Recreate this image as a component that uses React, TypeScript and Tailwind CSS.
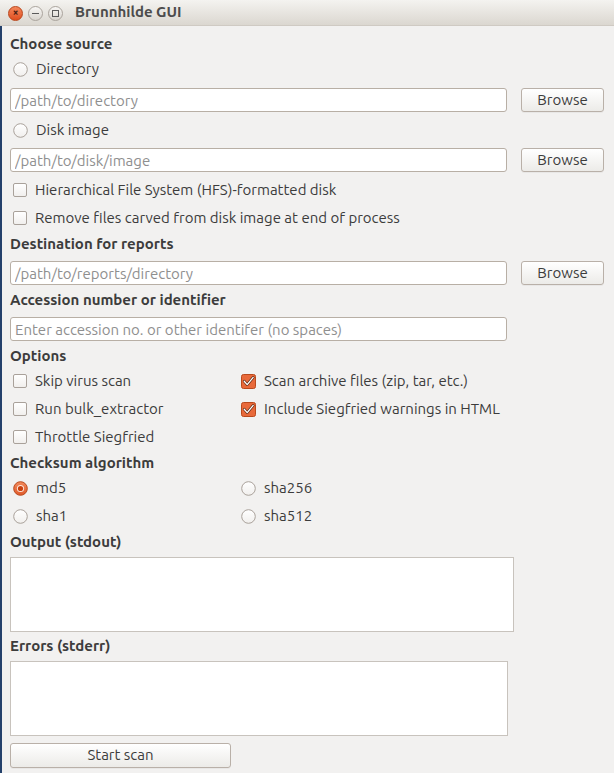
import React from 'react';

const FONT = "font-['Ubuntu','Open_Sans','Liberation_Sans',sans-serif]";

function Heading({ children, className = '' }: { children: React.ReactNode; className?: string }) {
  return (
    <div className={`h-[20px] flex items-center font-bold text-[15px] text-[#3c3c3c] ${className}`}>
      {children}
    </div>
  );
}

function RadioDot({ checked }: { checked?: boolean }) {
  if (checked) {
    return (
      <svg width="15" height="15" viewBox="0 0 15 15" className="shrink-0">
        <defs>
          <linearGradient id="rg" x1="0" y1="0" x2="0" y2="1">
            <stop offset="0" stopColor="#f28a5c" />
            <stop offset="1" stopColor="#e0592a" />
          </linearGradient>
        </defs>
        <circle cx="7.5" cy="7.5" r="6.8" fill="url(#rg)" stroke="#b9491c" strokeWidth="1" />
        <circle cx="7.5" cy="7.5" r="3.6" fill="#fbe4d8" />
        <circle cx="7.5" cy="7.5" r="2.6" fill="#c9410f" />
      </svg>
    );
  }
  return (
    <svg width="15" height="15" viewBox="0 0 15 15" className="shrink-0">
      <defs>
        <linearGradient id="ru" x1="0" y1="0" x2="0" y2="1">
          <stop offset="0" stopColor="#ffffff" />
          <stop offset="1" stopColor="#f1efed" />
        </linearGradient>
      </defs>
      <circle cx="7.5" cy="7.5" r="6.8" fill="url(#ru)" stroke="#a9a19a" strokeWidth="1" />
    </svg>
  );
}

function CheckBox({ checked }: { checked?: boolean }) {
  if (checked) {
    return (
      <svg width="15" height="15" viewBox="0 0 15 15" className="shrink-0">
        <rect x="0.5" y="0.5" width="14" height="14" rx="2" fill="#e8693a" stroke="#b9491c" />
        <path d="M3.2 7.2 L6.2 10.6 L12.2 3.4" fill="none" stroke="#5a2a16" strokeWidth="2.6" strokeLinecap="round" strokeLinejoin="round" />
        <path d="M3.2 7.2 L6.2 10.6 L12.2 3.4" fill="none" stroke="#ffffff" strokeWidth="1.3" strokeLinecap="round" strokeLinejoin="round" />
      </svg>
    );
  }
  return (
    <span className="w-[14px] h-[14px] shrink-0 rounded-[2px] border border-[#a9a19a] bg-gradient-to-b from-white to-[#f1efed]" />
  );
}

function Radio({ label, checked, className = '' }: { label: string; checked?: boolean; className?: string }) {
  return (
    <div className={`h-[20px] flex items-center pl-[3px] ${className}`}>
      <RadioDot checked={checked} />
      <span className="ml-[8px] text-[15px] text-[#3c3c3c]">{label}</span>
    </div>
  );
}

function Check({ label, checked, className = '' }: { label: string; checked?: boolean; className?: string }) {
  return (
    <div className={`h-[20px] flex items-center pl-[3px] ${className}`}>
      <CheckBox checked={checked} />
      <span className="ml-[8px] text-[15px] text-[#3c3c3c]">{label}</span>
    </div>
  );
}

function TextInput({ placeholder, className = '' }: { placeholder: string; className?: string }) {
  return (
    <input
      readOnly
      placeholder={placeholder}
      className={`h-[24px] w-[497px] rounded-[3px] border border-[#b8afa5] bg-white px-[4px] text-[15px] text-[#3c3c3c] placeholder:text-[#8f8f8f] outline-none ${className}`}
    />
  );
}

function Button({ children, className = '' }: { children: React.ReactNode; className?: string }) {
  return (
    <button
      type="button"
      className={`h-[24px] rounded-[3px] border border-[#b9b0a8] bg-gradient-to-b from-white to-[#ecebe8] text-[15px] text-[#3c3c3c] shadow-[0_1px_0_rgba(0,0,0,0.04)] ${className}`}
    >
      {children}
    </button>
  );
}

function PathRow({ placeholder, className = '' }: { placeholder: string; className?: string }) {
  return (
    <div className={`flex items-center ${className}`}>
      <TextInput placeholder={placeholder} />
      <Button className="ml-[14px] w-[83px]">Browse</Button>
    </div>
  );
}

function TitleBar() {
  return (
    <div className="h-[26px] flex items-center bg-gradient-to-b from-[#f4f3f0] to-[#dbd7d0] border-b border-[#cfcac3]">
      <div className="flex items-center pl-[8px] pt-[1px] gap-[5px]">
        <span className="w-[15px] h-[15px] rounded-full bg-gradient-to-b from-[#f48659] to-[#df4d1c] border border-[#b9441a] flex items-center justify-center text-[10px] leading-none text-[#4a2114] font-bold">
          ×
        </span>
        <span className="w-[15px] h-[15px] rounded-full bg-gradient-to-b from-[#f8f7f5] to-[#d8d4ce] border border-[#aaa49d] flex items-center justify-center">
          <span className="block w-[7px] h-[1px] bg-[#5b5b5b]" />
        </span>
        <span className="w-[15px] h-[15px] rounded-full bg-gradient-to-b from-[#f8f7f5] to-[#d8d4ce] border border-[#aaa49d] flex items-center justify-center">
          <span className="block w-[7px] h-[7px] border border-[#5b5b5b]" />
        </span>
      </div>
      <span className="ml-[12px] font-bold text-[15px] text-[#4c4c4c]">Brunnhilde GUI</span>
    </div>
  );
}

export default function App() {
  return (
    <div className={`w-[614px] h-[773px] overflow-hidden bg-[#f2f1f0] ${FONT}`}>
      <TitleBar />
      <div className="flex h-[747px]">
        <div className="w-[2px] bg-[#24416b]" />
        <div className="pl-[8px] pt-[8px]">
          <Heading>Choose source</Heading>
          <Radio label="Directory" className="mt-[5px]" />
          <PathRow placeholder="/path/to/directory" className="mt-[9px]" />
          <Radio label="Disk image" className="mt-[8px]" />
          <PathRow placeholder="/path/to/disk/image" className="mt-[8px]" />
          <Check label="Hierarchical File System (HFS)-formatted disk" className="mt-[8px]" />
          <Check label="Remove files carved from disk image at end of process" className="mt-[8px]" />

          <Heading className="mt-[6px]">Destination for reports</Heading>
          <PathRow placeholder="/path/to/reports/directory" className="mt-[7px]" />

          <Heading className="mt-[5px]">Accession number or identifier</Heading>
          <TextInput placeholder="Enter accession no. or other identifer (no spaces)" className="mt-[7px]" />

          <Heading className="mt-[5px]">Options</Heading>
          <div className="grid grid-cols-[228px_1fr] gap-y-[8px] mt-[5px]">
            <Check label="Skip virus scan" />
            <Check label="Scan archive files (zip, tar, etc.)" checked />
            <Check label="Run bulk_extractor" />
            <Check label="Include Siegfried warnings in HTML" checked />
            <Check label="Throttle Siegfried" />
          </div>

          <Heading className="mt-[6px]">Checksum algorithm</Heading>
          <div className="grid grid-cols-[228px_1fr] gap-y-[8px] mt-[5px]">
            <Radio label="md5" checked />
            <Radio label="sha256" />
            <Radio label="sha1" />
            <Radio label="sha512" />
          </div>

          <Heading className="mt-[6px]">Output (stdout)</Heading>
          <div className="mt-[5px] w-[504px] h-[75px] bg-white border border-[#c8c3bd]" />

          <Heading className="mt-[4px]">Errors (stderr)</Heading>
          <div className="mt-[5px] w-[498px] h-[75px] bg-white border border-[#c8c3bd]" />

          <Button className="mt-[7px] w-[221px] h-[25px] block">Start scan</Button>
        </div>
      </div>
    </div>
  );
}
